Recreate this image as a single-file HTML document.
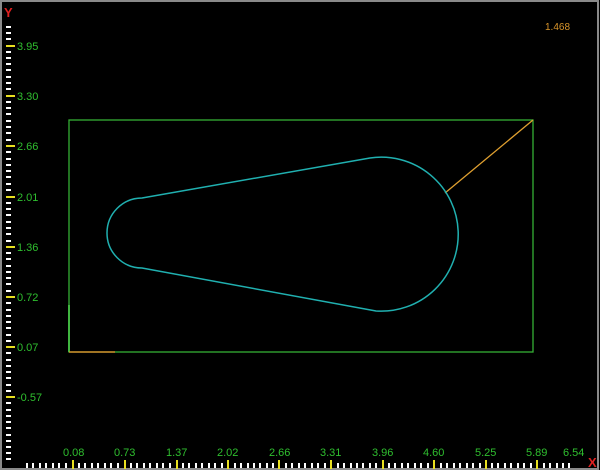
<!DOCTYPE html>
<html><head><style>
html,body{margin:0;padding:0;background:#000;width:600px;height:470px;overflow:hidden}
svg{display:block}
text{font-family:"Liberation Sans",sans-serif;font-size:11px;fill:#2fbf2f}
</style></head><body>
<svg width="600" height="470" viewBox="0 0 600 470">
<rect x="0" y="0" width="600" height="470" fill="#000"/>
<rect x="1" y="1" width="597" height="468" fill="none" stroke="#8a8a8a" stroke-width="2"/>
<text x="4" y="17" style="fill:#e02020;font-size:13px;font-weight:bold">Y</text>
<text x="588" y="467" style="fill:#e02020;font-size:13px;font-weight:bold">X</text>
<text x="545" y="30" style="fill:#d9952a;font-size:10px">1.468</text>
<g stroke="#fff" stroke-width="2">
<path d="M6 27h5M6 33h5M6 39h5M6 52h5M6 58h5M6 64h5M6 70h5M6 77h5M6 83h5M6 89h5M6 102h5M6 108h5M6 114h5M6 121h5M6 127h5M6 133h5M6 140h5M6 152h5M6 159h5M6 165h5M6 171h5M6 177h5M6 184h5M6 190h5M6 203h5M6 209h5M6 215h5M6 222h5M6 228h5M6 234h5M6 241h5M6 253h5M6 259h5M6 266h5M6 272h5M6 278h5M6 284h5M6 291h5M6 303h5M6 310h5M6 316h5M6 322h5M6 328h5M6 335h5M6 341h5M6 353h5M6 360h5M6 366h5M6 372h5M6 378h5M6 385h5M6 391h5M6 403h5M6 410h5M6 416h5M6 422h5M6 428h5M6 435h5M6 441h5M6 447h5M6 453h5M6 459h5"/>
<path d="M27 463v5M33 463v5M40 463v5M46 463v5M53 463v5M59 463v5M66 463v5M79 463v5M85 463v5M92 463v5M98 463v5M105 463v5M111 463v5M118 463v5M131 463v5M137 463v5M144 463v5M150 463v5M157 463v5M163 463v5M170 463v5M183 463v5M189 463v5M196 463v5M202 463v5M209 463v5M215 463v5M222 463v5M235 463v5M241 463v5M248 463v5M254 463v5M260 463v5M267 463v5M273 463v5M286 463v5M292 463v5M299 463v5M305 463v5M312 463v5M318 463v5M325 463v5M338 463v5M344 463v5M351 463v5M357 463v5M363 463v5M370 463v5M376 463v5M389 463v5M395 463v5M402 463v5M408 463v5M415 463v5M421 463v5M428 463v5M441 463v5M447 463v5M454 463v5M460 463v5M467 463v5M473 463v5M480 463v5M492 463v5M498 463v5M505 463v5M511 463v5M518 463v5M524 463v5M531 463v5M544 463v5M550 463v5M557 463v5M563 463v5M569 463v5"/>
</g>
<g stroke="#e8e020" stroke-width="2">
<path d="M6 46h9M6 96h9M6 146h9M6 197h9M6 247h9M6 297h9M6 347h9M6 397h9"/>
<path d="M73 460v9M125 460v9M177 460v9M228 460v9M279 460v9M331 460v9M383 460v9M434 460v9M486 460v9M537 460v9"/>
</g>
<g>
<text x="17" y="50">3.95</text><text x="17" y="100">3.30</text><text x="17" y="150">2.66</text><text x="17" y="201">2.01</text><text x="17" y="251">1.36</text><text x="17" y="301">0.72</text><text x="17" y="351">0.07</text><text x="17" y="401">-0.57</text>
<text x="63" y="456">0.08</text><text x="114" y="456">0.73</text><text x="166" y="456">1.37</text><text x="217" y="456">2.02</text><text x="269" y="456">2.66</text><text x="320" y="456">3.31</text><text x="372" y="456">3.96</text><text x="423" y="456">4.60</text><text x="475" y="456">5.25</text><text x="526" y="456">5.89</text><text x="563" y="456">6.54</text>
</g>
<rect x="69" y="120" width="464" height="232" fill="none" stroke="#35b035" stroke-width="1.3"/>
<path d="M69 305V352" stroke="#50e050" stroke-width="1.5"/>
<path d="M69 352H115" stroke="#d08a2a" stroke-width="1.5"/>
<path d="M445 193L533 120" stroke="#e0a030" stroke-width="1.3"/>
<path d="M142 198 L370 158 A77 77 0 1 1 376 311 L142 268 A35 35 0 0 1 142 198 Z" fill="none" stroke="#20b0b0" stroke-width="1.5"/>
</svg>
</body></html>
